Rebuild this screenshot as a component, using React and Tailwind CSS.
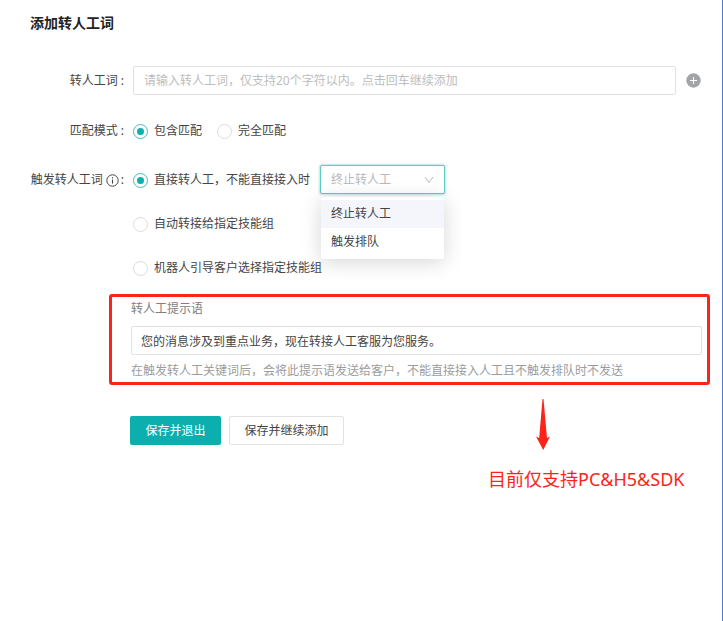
import { useState } from "react";

const MODES = [
  { value: "contain", label: "包含匹配" },
  { value: "exact", label: "完全匹配" },
];

const OPTIONS = ["终止转人工", "触发排队"];

const InfoIcon = () => (
  <svg viewBox="0 0 13 13" className="w-[13px] h-[13px]" fill="none" stroke="#444" aria-hidden="true">
    <circle cx="6.5" cy="6.5" r="5.7" strokeWidth="1" />
    <path d="M6.5 5.6v4" strokeWidth="1.1" />
    <path d="M6.5 3.2v1.3" strokeWidth="1.1" />
  </svg>
);

const PlusIcon = () => (
  <svg viewBox="0 0 15 15" className="w-[15px] h-[15px]" aria-hidden="true">
    <circle cx="7.5" cy="7.5" r="7.2" fill="#a3a4a8" />
    <path d="M7.5 4v7M4 7.5h7" stroke="#fff" strokeWidth="1.1" />
  </svg>
);

const FormLabel = ({ as: Tag = "label", children, ...props }) => (
  <Tag className="w-[133px] shrink-0 pr-[9px] flex items-center justify-end" {...props}>
    {children}
  </Tag>
);

const Radio = ({ name, value, checked, onChange, label }) => (
  <label className="flex items-center gap-[6px] cursor-pointer">
    <input
      type="radio"
      name={name}
      value={value}
      checked={checked}
      onChange={() => onChange(value)}
      className="appearance-none w-[15px] h-[15px] shrink-0 rounded-full border border-[#dcdcdc] bg-white grid place-content-center checked:border-[#3fc0c0] checked:before:w-[7px] checked:before:h-[7px] checked:before:rounded-full checked:before:bg-[#0cafae] checked:before:content-['']"
    />
    <span>{label}</span>
  </label>
);

const App = () => {
  const [word, setWord] = useState("");
  const [mode, setMode] = useState("contain");
  const [trigger, setTrigger] = useState("direct");
  const [fallback, setFallback] = useState(OPTIONS[0]);
  const [open, setOpen] = useState(true);
  const [tip, setTip] = useState("您的消息涉及到重点业务，现在转接人工客服为您服务。");

  const pick = (option) => {
    setFallback(option);
    setOpen(false);
  };

  return (
    <div className="min-h-screen bg-white border-r border-[#4a7fc4] pt-[13px] text-[12px] leading-5 text-[#444] font-['Noto_Sans','Noto_Sans_CJK_SC',sans-serif]">
      <h1 className="pl-[30px] text-[14px] leading-5 font-bold text-[#222]">添加转人工词</h1>

      <form onSubmit={(e) => e.preventDefault()}>
        <div className="mt-[33px] flex items-center pr-[21px]">
          <FormLabel htmlFor="word">转人工词 :</FormLabel>
          <input
            id="word"
            type="text"
            value={word}
            maxLength={20}
            onChange={(e) => setWord(e.target.value)}
            placeholder="请输入转人工词，仅支持20个字符以内。点击回车继续添加"
            className="flex-1 min-w-0 h-[29px] px-[10px] border border-[#e2e2e2] rounded-[2px] outline-none placeholder:text-[#bdbdbd]"
          />
          <button type="button" aria-label="添加" className="ml-[10px]">
            <PlusIcon />
          </button>
        </div>

        <div className="mt-[26px] flex items-center" role="radiogroup" aria-labelledby="mode-label">
          <FormLabel as="span" id="mode-label">
            匹配模式 :
          </FormLabel>
          <div className="flex gap-[15px]">
            {MODES.map((m) => (
              <Radio key={m.value} name="mode" {...m} checked={mode === m.value} onChange={setMode} />
            ))}
          </div>
        </div>

        <div className="mt-6 flex items-start">
          <div className="h-[30px] flex">
            <FormLabel htmlFor="fallback">
              触发转人工词
              <span className="ml-[3px] mr-[2px]">
                <InfoIcon />
              </span>
              :
            </FormLabel>
          </div>
          <div className="flex flex-col gap-[14px]">
            <div className="h-[30px] flex items-center gap-[10px]">
              <Radio
                name="trigger"
                value="direct"
                label="直接转人工，不能直接接入时"
                checked={trigger === "direct"}
                onChange={setTrigger}
              />
              <div className="relative self-start">
                <select
                  id="fallback"
                  value={fallback}
                  onChange={(e) => pick(e.target.value)}
                  className="block appearance-none w-[125px] h-[29px] px-[10px] border border-[#5fcbc9] rounded-[2px] bg-white text-[#b8b8b8] outline-none shadow-[0_0_2px_1px_#b9e8e7]"
                >
                  {OPTIONS.map((o) => (
                    <option key={o}>{o}</option>
                  ))}
                </select>
                <svg
                  viewBox="0 0 10 8"
                  className="absolute right-[11px] top-[11px] w-[10px] h-2 pointer-events-none"
                  fill="none"
                  stroke="#b8b8b8"
                  aria-hidden="true"
                >
                  <path d="M1 1l4 5.5L9 1" />
                </svg>
                {open && (
                  <ul
                    role="listbox"
                    className="absolute z-10 top-8 inset-x-px py-[3px] bg-white rounded-[2px] shadow-[0_3px_20px_rgba(0,0,0,0.17)]"
                  >
                    {OPTIONS.map((o) => (
                      <li
                        key={o}
                        role="option"
                        aria-selected={o === fallback}
                        onClick={() => pick(o)}
                        className={`h-7 px-[10px] flex items-center cursor-pointer ${o === fallback ? "bg-[#f4f6fb]" : ""}`}
                      >
                        {o}
                      </li>
                    ))}
                  </ul>
                )}
              </div>
            </div>
            <div className="h-[30px] flex items-center">
              <Radio
                name="trigger"
                value="group"
                label="自动转接给指定技能组"
                checked={trigger === "group"}
                onChange={setTrigger}
              />
            </div>
            <div className="h-[30px] flex items-center">
              <Radio
                name="trigger"
                value="guide"
                label="机器人引导客户选择指定技能组"
                checked={trigger === "guide"}
                onChange={setTrigger}
              />
            </div>
          </div>
        </div>

        <div className="mt-[11px] ml-[109px] mr-3 pt-[2px] pb-px pl-[19px] pr-[5px] border-3 border-[#fc2419] rounded-[3px]">
          <label htmlFor="tip" className="block text-[#808080]">
            转人工提示语
          </label>
          <input
            id="tip"
            type="text"
            value={tip}
            onChange={(e) => setTip(e.target.value)}
            className="block mt-[7px] w-full h-[29px] px-[9px] border border-[#e2e2e2] rounded-[2px] outline-none"
          />
          <p className="mt-[6px] text-[#9c9c9c]">
            在触发转人工关键词后，会将此提示语发送给客户，不能直接接入人工且不触发排队时不发送
          </p>
        </div>

        <div className="flex items-start pl-[130px]">
          <div className="mt-[31px] flex gap-2">
            <button type="submit" className="w-[91px] h-[29px] rounded-[2px] bg-[#0cafae] text-white">
              保存并退出
            </button>
            <button type="button" className="w-[115px] h-[29px] rounded-[2px] border border-[#e2e2e2] bg-white">
              保存并继续添加
            </button>
          </div>
          <div className="mt-[14px] ml-36 text-[#fc2419]">
            <svg viewBox="0 0 14 51" className="ml-12 w-[14px] h-[51px]" fill="currentColor" aria-hidden="true">
              <path d="M6.5 0h1L11 39 14 37.5 7.2 51 0 37.5l3.2 1.5z" />
            </svg>
            <p className="mt-[17px] text-[18px] leading-6 whitespace-nowrap">目前仅支持PC&amp;H5&amp;SDK</p>
          </div>
        </div>
      </form>
    </div>
  );
};

export default App;
